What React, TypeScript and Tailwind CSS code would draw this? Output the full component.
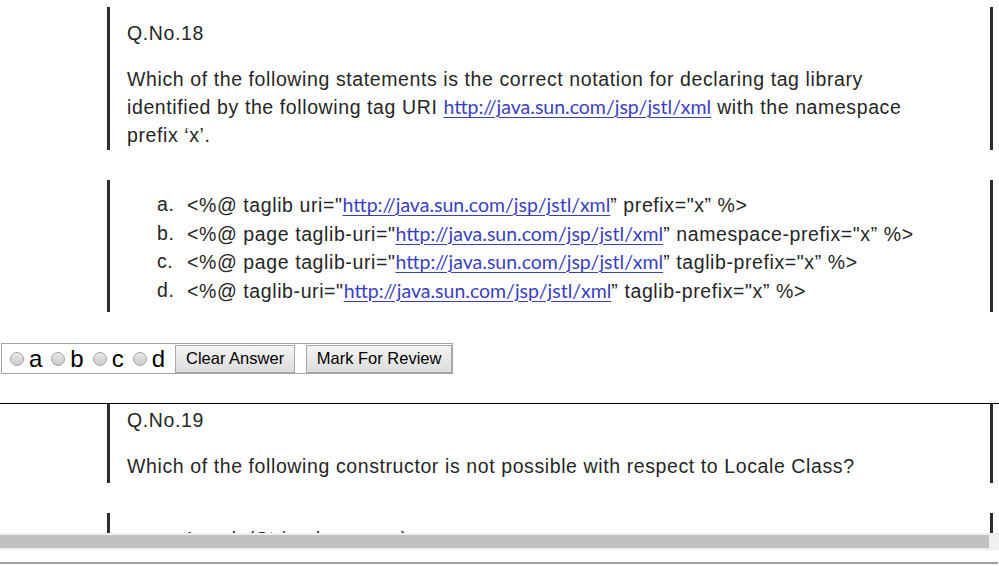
import React from "react";

const URI = "http://java.sun.com/jsp/jstl/xml";

function Uri() {
    return (
        <span className="text-[#3a3fc2] underline underline-offset-[3px] decoration-1 tracking-normal font-[family-name:Lato,sans-serif] text-[19.5px]">
            {URI}
        </span>
    );
}

function Block({ className, children }: { className: string; children: React.ReactNode }) {
    return (
        <div
            className={
                "ml-[107px] w-[886px] border-x-[3px] border-[#2d2d2d] pl-[17px] text-[19.5px] tracking-[0.6px] leading-[27.5px] text-[#262626] " +
                className
            }
        >
            {children}
        </div>
    );
}

function Option({ label, children }: { label: string; children: React.ReactNode }) {
    return (
        <div className="flex">
            <span className="w-[30px] pl-[30px] box-content">{label}</span>
            <span className="whitespace-nowrap">{children}</span>
        </div>
    );
}

function Radio({ letter, first }: { letter: string; first?: boolean }) {
    return (
        <label className={"flex items-center " + (first ? "ml-[8px]" : "ml-[9px]")}>
            <span className="w-[14px] h-[14px] rounded-full border border-[#a2a2a2] bg-linear-to-b from-[#e8e8e8] to-[#cbcbcb]" />
            <span className="ml-[5px] text-[24px] leading-none text-black">{letter}</span>
        </label>
    );
}

export default function App() {
    return (
        <div className="w-[999px] h-[566px] bg-white overflow-hidden font-[family-name:'Liberation_Sans',Arial,sans-serif] text-black">
            <div className="h-[533px] overflow-hidden pt-[7px]">
                <Block className="h-[143px] pt-[13px]">
                    <div>Q.No.18</div>
                    <div className="mt-[18px] whitespace-nowrap">
                        Which of the following statements is the correct notation for declaring tag library
                        <br />
                        identified by the following tag URI <Uri /> with the namespace
                        <br />
                        prefix ‘x’.
                    </div>
                </Block>

                <Block className="mt-[30px] h-[132px] pt-[11px]">
                    <Option label="a.">
                        &lt;%@ taglib uri="<Uri />” prefix="x” %&gt;
                    </Option>
                    <Option label="b.">
                        &lt;%@ page taglib-uri="<Uri />” namespace-prefix="x” %&gt;
                    </Option>
                    <Option label="c.">
                        &lt;%@ page taglib-uri="<Uri />” taglib-prefix="x” %&gt;
                    </Option>
                    <Option label="d.">
                        &lt;%@ taglib-uri="<Uri />” taglib-prefix="x” %&gt;
                    </Option>
                </Block>

                <div className="mt-[31px] ml-[1px] inline-flex h-[31px] items-center border border-[#a3a3a3] align-top">
                    <Radio letter="a" first />
                    <Radio letter="b" />
                    <Radio letter="c" />
                    <Radio letter="d" />
                    <button className="ml-[10px] h-[28px] w-[120px] border border-[#a9a9a9] bg-linear-to-b from-[#f5f5f5] to-[#dcdcdc] text-[16.5px] text-black">
                        Clear Answer
                    </button>
                    <button className="ml-[11px] h-[28px] w-[146px] border border-[#a9a9a9] bg-linear-to-b from-[#f5f5f5] to-[#dcdcdc] text-[16.5px] text-black">
                        Mark For Review
                    </button>
                </div>

                <div className="mt-[29px] h-px bg-black" />

                <Block className="h-[79px] pt-[3px]">
                    <div>Q.No.19</div>
                    <div className="mt-[18.5px] whitespace-nowrap">
                        Which of the following constructor is not possible with respect to Locale Class?
                    </div>
                </Block>

                <Block className="mt-[30px] h-[60px] pt-[13px]">
                    <Option label="a.">Locale(String language)</Option>
                    <Option label="b.">Locale(String language, String country)</Option>
                </Block>
            </div>

            <div className="h-[17px] bg-[#f0f0f0] pt-[2px]">
                <div className="h-[13px] w-[989px] bg-[#c1c1c1]" />
            </div>
            <div className="mt-[12px] h-[2px] w-[998px] bg-[#a0a0a0]" />
        </div>
    );
}
